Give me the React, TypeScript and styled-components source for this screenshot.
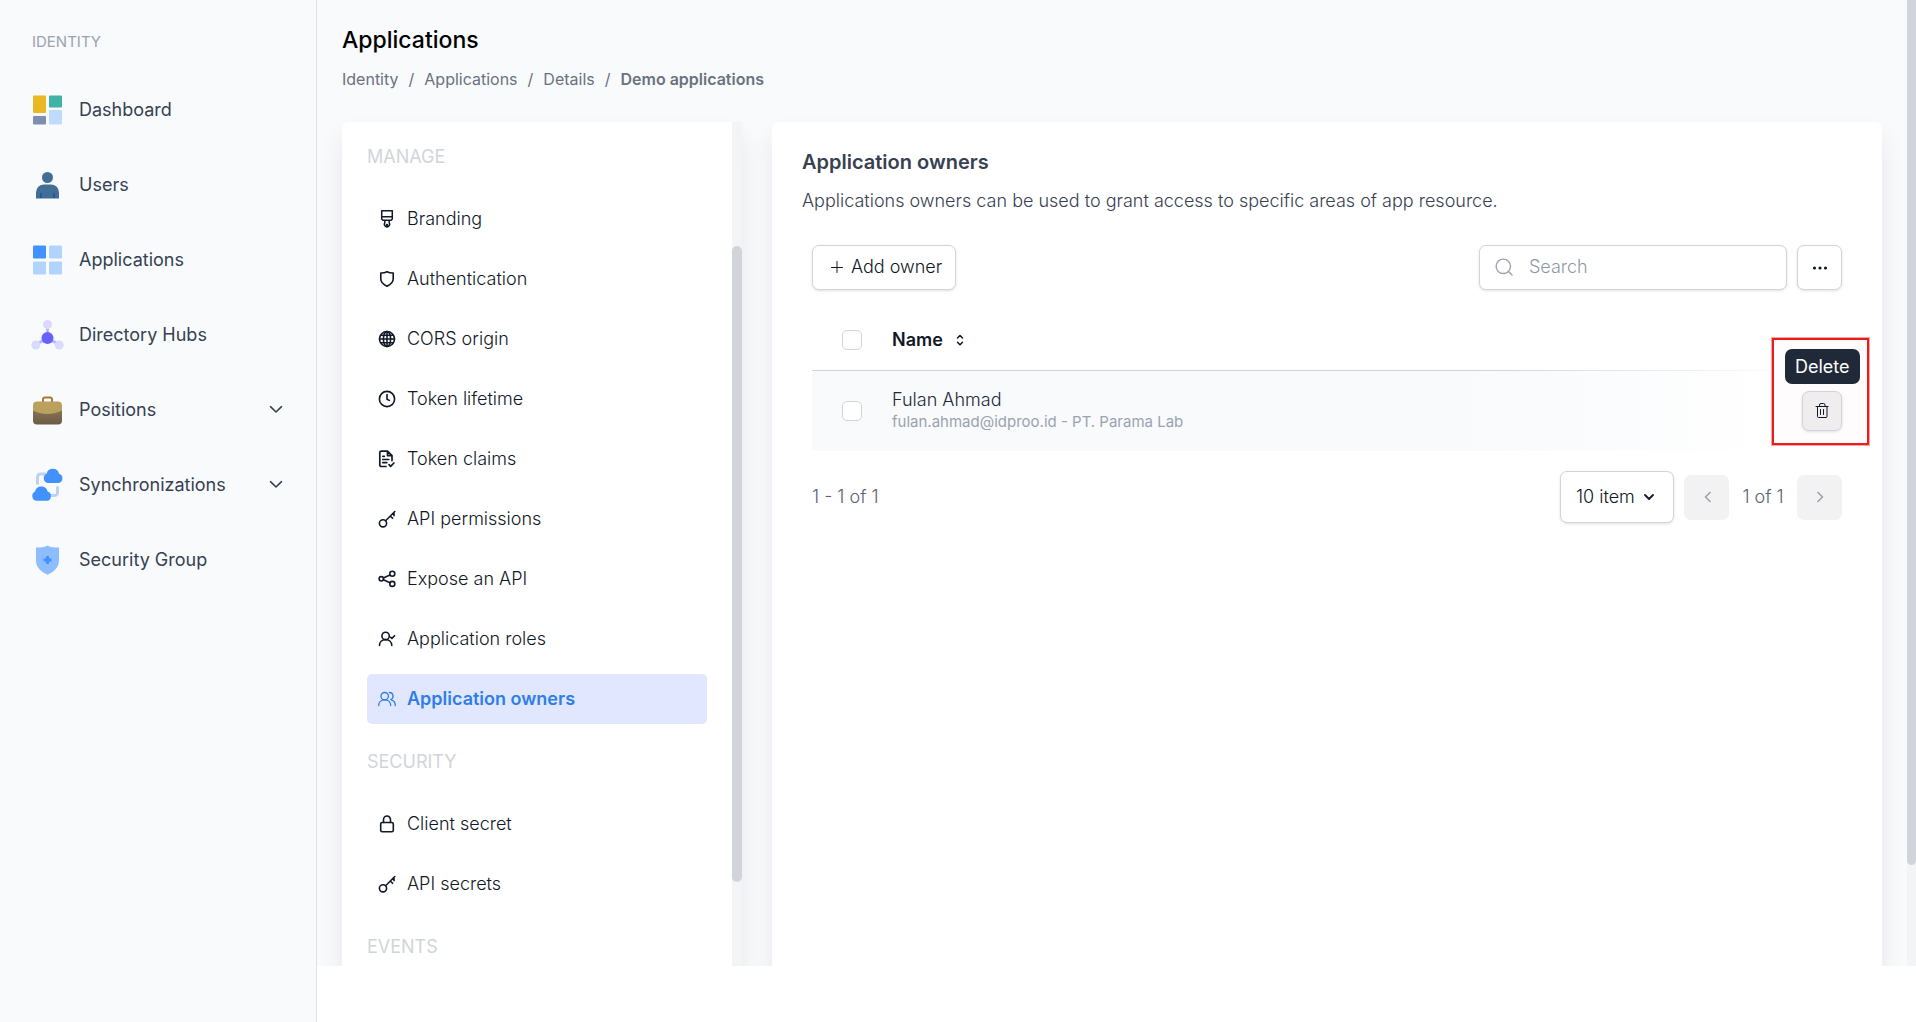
import React from "react";
import styled, { createGlobalStyle, css } from "styled-components";

const GlobalStyle = createGlobalStyle`
  *, *::before, *::after { box-sizing: border-box; }
  body {
    margin: 0;
    background: #ffffff;
    color: #111827;
    font-family: Inter, "Liberation Sans", sans-serif;
    font-size: 18px;
    line-height: 24px;
  }
  button, input, select { font: inherit; color: inherit; }
  h1, h2, h3, p, ul, ol { margin: 0; padding: 0; font-weight: 400; font-size: inherit; }
  ul, ol { list-style: none; }
  a { color: inherit; text-decoration: none; }
  svg { display: block; flex: none; }
`;

const Page = styled.div`
  display: flex;
  height: 100vh;
  overflow: hidden;
`;

/* ---------- Sidebar ---------- */

const Sidebar = styled.nav`
  flex: 0 0 317px;
  padding: 30px 33px 0 31px;
  background: #f8fafc;
  border-right: 1px solid #e0e2e6;
`;

const SidebarHeading = styled.h2`
  font-size: 15px;
  color: #9ca3af;
  padding-left: 1px;
  margin-bottom: 18px;
`;

const SidebarLink = styled.a`
  display: flex;
  align-items: center;
  gap: 15px;
  height: 75px;
  color: #374151;
  & > span { flex: 1; }
`;

/* ---------- Main ---------- */

const Main = styled.div`
  flex: 1;
  min-width: 0;
  height: calc(100vh - 56px);
  display: flex;
  overflow: hidden;
  background: #f8fafc;
`;

const Workspace = styled.main`
  flex: 1;
  min-width: 0;
  display: flex;
  flex-direction: column;
  padding: 24px 25px 0;
`;

const PageTitle = styled.h1`
  font-size: 23px;
  line-height: 32px;
  font-weight: 500;
  color: #000000;
`;

const Breadcrumb = styled.ol`
  display: flex;
  margin: 11px 0 31px;
  font-size: 16px;
  color: #6b7280;
  li + li::before { content: "/"; margin: 0 10px; font-weight: 400; }
  [aria-current] { font-weight: 600; }
`;

const Columns = styled.div`
  flex: 1;
  min-height: 0;
  display: flex;
  gap: 30px;
  font-weight: 300;
`;

const cardLook = css`
  background: #ffffff;
  border-radius: 7px;
  box-shadow: 0 14px 24px rgba(15, 23, 42, 0.08);
`;

const MenuCard = styled.aside`
  ${cardLook}
  flex: 0 0 400px;
  display: flex;
  height: calc(100% + 56px);
`;

const MenuScroll = styled.div`
  flex: 1;
  padding: 0 25px;
`;

const MenuHeading = styled.h3<{ $first?: boolean }>`
  height: ${(p) => (p.$first ? 72 : 75)}px;
  padding-top: ${(p) => (p.$first ? 23 : 26)}px;
  color: #d1d5db;
`;

const MenuList = styled.ul`
  display: flex;
  flex-direction: column;
  gap: 10px;
`;

const MenuLink = styled.a<{ $active?: boolean }>`
  display: flex;
  align-items: center;
  gap: 11px;
  height: 50px;
  padding-left: 11px;
  border-radius: 5px;
  color: ${(p) => (p.$active ? "#2f7de9" : "#111827")};
  background: ${(p) => (p.$active ? "#e0e7ff" : "transparent")};
  font-weight: ${(p) => (p.$active ? 600 : 300)};
`;

const Track = styled.div<{ $width: number }>`
  flex: 0 0 ${(p) => p.$width}px;
  background: #f3f4f6;
  overflow: hidden;
`;

const MenuThumb = styled.div`
  height: 636px;
  margin-top: 124px;
  border-radius: 5px;
  background: #d1d5db;
`;

const PageThumb = styled.div`
  height: 865px;
  border-radius: 0 0 5px 5px;
  background: #d1d5db;
`;

/* ---------- Owners panel ---------- */

const Panel = styled.section`
  ${cardLook}
  flex: 1;
  min-width: 0;
  height: calc(100% + 56px);
  padding: 26px 30px;
`;

const PanelTitle = styled.h2`
  font-size: 20px;
  line-height: 28px;
  font-weight: 600;
  color: #374151;
`;

const PanelText = styled.p`
  margin-top: 13px;
  font-weight: 300;
  color: #374151;
`;

const PanelBody = styled.div`
  padding: 32px 10px 0;
`;

const Toolbar = styled.div`
  display: flex;
  align-items: center;
  gap: 10px;
`;

const outlined = css`
  background: #ffffff;
  border: 1px solid #d1d5db;
  border-radius: 7px;
  box-shadow: 0 1px 3px rgba(0, 0, 0, 0.12);
`;

const AddButton = styled.button`
  ${outlined}
  display: flex;
  align-items: center;
  gap: 8px;
  height: 45px;
  padding: 0 13px 1px 18px;
  margin-right: auto;
`;

const SearchBox = styled.label`
  ${outlined}
  display: flex;
  align-items: center;
  gap: 16px;
  width: 308px;
  height: 45px;
  padding: 0 15px 1px;
  color: #9ca3af;
  input {
    flex: 1;
    min-width: 0;
    border: 0;
    padding: 0;
    outline: 0;
    background: transparent;
    color: #1f2937;
  }
  input::placeholder { color: #9098a6; opacity: 1; }
`;

const MoreButton = styled.button`
  ${outlined}
  display: grid;
  place-items: center;
  width: 45px;
  height: 45px;
  padding: 0;
`;

const OwnersTable = styled.table`
  width: 100%;
  margin-top: 20px;
  border-collapse: collapse;
  th, td { padding: 0; text-align: left; }
  thead tr {
    height: 61px;
    background: linear-gradient(to right, #d1d5db 66%, #ffffff 96%) bottom / 100% 1px no-repeat;
  }
  thead th { padding-bottom: 1px; }
  tbody tr {
    height: 80px;
    background: linear-gradient(to right, #f8fafc 64%, #ffffff 94%);
  }
`;

const CheckCell = styled.td`
  width: 80px;
  && { padding-left: 30px; }
`;

const Checkbox = styled.input`
  appearance: none;
  display: block;
  width: 20px;
  height: 20px;
  margin: 0;
  border: 1px solid #d1d5db;
  border-radius: 5px;
  background: #ffffff;
`;

const SortButton = styled.button`
  display: flex;
  align-items: center;
  gap: 11px;
  padding: 0;
  border: 0;
  background: none;
  font-weight: 600;
  color: #111827;
`;

const OwnerName = styled.div`
  line-height: 22px;
  color: #1f2937;
`;

const OwnerMeta = styled.div`
  font-size: 15px;
  line-height: 22px;
  font-weight: 400;
  color: #9ca3af;
`;

const ActionCell = styled.td`
  width: 40px;
`;

const ActionWrap = styled.div`
  position: relative;
  width: 40px;
  height: 40px;
`;

const Highlight = styled.div`
  position: absolute;
  top: -53px;
  left: -30px;
  width: 97px;
  height: 107px;
  border: 2px solid #ea1c1c;
  outline: 1px solid rgba(234, 28, 28, 0.4);
  background: #fffcfd;
`;

const DeleteButton = styled.button`
  ${outlined}
  position: relative;
  display: grid;
  place-items: center;
  width: 40px;
  height: 40px;
  padding: 0;
  background: #efedee;
`;

const Tooltip = styled.div`
  position: absolute;
  top: -42px;
  left: -17px;
  padding: 6px 10px 5px;
  border-radius: 7px;
  background: #1f2937;
  color: #ffffff;
  font-weight: 400;
`;

const Pager = styled.div`
  display: flex;
  align-items: center;
  gap: 10px;
  margin-top: 20px;
  color: #5b6372;
`;

const PagerRange = styled.span`
  margin-right: auto;
`;

const PagerPosition = styled.span`
  min-width: 48px;
  text-align: center;
`;

const PageSize = styled.div`
  position: relative;
  color: #111827;
  select {
    ${outlined}
    display: block;
    appearance: none;
    width: 114px;
    height: 52px;
    padding: 0 15px;
    color: #111827;
  }
  svg { position: absolute; right: 20px; top: 21px; pointer-events: none; }
`;

const PageButton = styled.button`
  display: grid;
  place-items: center;
  width: 45px;
  height: 45px;
  padding: 0;
  border: 0;
  border-radius: 7px;
  background: #f2f2f2;
  color: #9ca3af;
`;

/* ---------- Icons ---------- */

const Glyph = ({ children, size = 18, box = 18, width = 1.4 }: { children: React.ReactNode; size?: number; box?: number; width?: number }) => (
  <svg width={size} height={size} viewBox={`0 0 ${box} ${box}`} fill="none" stroke="currentColor" strokeWidth={width} strokeLinecap="round" strokeLinejoin="round" aria-hidden="true">
    {children}
  </svg>
);

const BrushIcon = () => (
  <Glyph width={1.5}>
    <path d="M3.700 .8h10.600v8.200l-1.200 1.200H4.900L3.700 9zM3.700 6.800h10.600M6.800 10.400v2.400a2.600 2.600 0 1 0 4.400 0v-2.400" />
    <circle cx="9" cy="15" r=".6" />
  </Glyph>
);
const ShieldIcon = () => (
  <Glyph width={1.6}>
    <path d="M9 1.700c-1.800 1-4 1.300-6.200 1.300v6c0 3.600 3 5.700 6.200 7.200 3.200-1.500 6.200-3.600 6.200-7.200V3C13 3 10.800 2.700 9 1.700z" />
  </Glyph>
);
const GlobeIcon = () => (
  <Glyph width={1.600}>
    <circle cx="9" cy="9" r="7.500" />
    <ellipse cx="9" cy="9" rx="3.600" ry="7.500" />
    <path d="M9 1.500v15M1.500 9h15M2.600 5.300h12.800M2.600 12.700h12.800" />
  </Glyph>
);
const ClockIcon = () => (
  <Glyph width={1.600}>
    <circle cx="9" cy="9" r="7.600" />
    <path d="M9 4.600v4.600l2.300 1.200" />
  </Glyph>
);
const DocCheckIcon = () => (
  <Glyph width={1.700}>
    <path d="M8 16.500H3.300a1.500 1.500 0 0 1-1.500-1.500V2.600a1.500 1.500 0 0 1 1.500-1.500h6.200l4.500 4.500v5M9.500 1.300v4.300H14M4.800 6.300h1.500M4.800 9.500h6M4.800 12.600h4M11 14.700l1.600 1.600 3.300-3.300" />
  </Glyph>
);
const KeyIcon = () => (
  <Glyph width={1.600}>
    <circle cx="5" cy="13.300" r="3.600" />
    <path d="M7.600 10.700L16.800 1.500M16 2.300v3.400M12.300 6l2.300 2.300" />
  </Glyph>
);
const ShareIcon = () => (
  <Glyph width={1.600}>
    <circle cx="3.300" cy="8.800" r="2.200" />
    <circle cx="14.300" cy="3.700" r="2.500" />
    <circle cx="14.300" cy="13.900" r="2.500" />
    <path d="M5.400 7.900l6.500-3M5.400 9.800l6.500 3" />
  </Glyph>
);
const RoleIcon = () => (
  <Glyph width={1.600}>
    <circle cx="7.600" cy="5.900" r="3.700" />
    <path d="M1.500 15.500c0-3.500 2.500-5.900 6.100-5.900s6.200 2.400 6.200 5.900M12.700 7.200l1.200 1.200 2.700-2.700" />
  </Glyph>
);
const OwnersIcon = () => (
  <Glyph width={1.300}>
    <circle cx="6.700" cy="6.200" r="3.700" />
    <path d="M.7 15.500c0-3.300 2.400-5.600 6-5.600s6 2.300 6 5.600M11.300 2.500a3.700 3.700 0 0 1 1.500 7.100M13.300 9.900c2.400.7 4 2.700 4 5.600" />
  </Glyph>
);
const LockIcon = () => (
  <Glyph width={1.600}>
    <rect x="2.700" y="7.500" width="12.600" height="9.200" rx="1.500" />
    <path d="M5.500 7.500V4.700a3.500 3.700 0 0 1 7 0v2.800" />
  </Glyph>
);

const NavSvg = ({ children }: { children: React.ReactNode }) => (
  <svg width="33" height="34" viewBox="0 0 33 34" aria-hidden="true">{children}</svg>
);

const DashboardIcon = () => (
  <NavSvg>
    <rect x="2" y="2.500" width="13" height="17.500" rx="1" fill="#e9b825" />
    <rect x="18" y="2.500" width="13" height="12" rx="1" fill="#3fb3a8" />
    <rect x="2" y="23" width="13" height="8.500" rx="1" fill="#7c8fae" />
    <rect x="18" y="17" width="13" height="14.500" rx="1" fill="#bfdbfe" />
  </NavSvg>
);
const UserIcon = () => (
  <NavSvg>
    <circle cx="16.500" cy="9.500" r="5.500" fill="#426d97" />
    <path d="M5 30.500v-6a8 8 0 0 1 8-8h7a8 8 0 0 1 8 8v6z" fill="#426d97" />
    <path d="M10 25v5M23 25v5" stroke="#1d5b90" strokeWidth="1.700" />
  </NavSvg>
);
const AppsIcon = () => (
  <NavSvg>
    <rect x="2" y="2.500" width="13" height="13" rx="1" fill="#4191ff" />
    <rect x="18" y="2.500" width="13" height="13" rx="1" fill="#b3d3ff" />
    <rect x="2" y="18.500" width="13" height="13" rx="1" fill="#b3d3ff" />
    <rect x="18" y="18.500" width="13" height="13" rx="1" fill="#b3d3ff" />
  </NavSvg>
);
const HubIcon = () => (
  <NavSvg>
    <path d="M16.500 7v13L6 26M16.500 20L27 26" stroke="#b5b1ff" strokeWidth="2.600" fill="none" />
    <circle cx="16.500" cy="6.500" r="4.500" fill="#dad9ff" />
    <circle cx="4.800" cy="27" r="4.500" fill="#dad9ff" />
    <circle cx="28.200" cy="27" r="4.500" fill="#dad9ff" />
    <circle cx="16.500" cy="20" r="6" fill="#6661ff" />
  </NavSvg>
);
const BriefcaseIcon = () => (
  <NavSvg>
    <defs>
      <linearGradient id="case-body" x1="0" y1="0" x2="0" y2="1">
        <stop offset="0" stopColor="#8f7b5c" />
        <stop offset="1" stopColor="#6b5c45" />
      </linearGradient>
    </defs>
    <path d="M12 9V6.500a2 2 0 0 1 2-2h5a2 2 0 0 1 2 2V9" fill="none" stroke="#aa7831" strokeWidth="2" />
    <rect x="2" y="12" width="29" height="19.500" rx="4" fill="url(#case-body)" />
    <path d="M2 17.500V12.500a4 4 0 0 1 4-4h21a4 4 0 0 1 4 4v5c-8 4.500-21 4.500-29 0z" fill="#baa15d" />
  </NavSvg>
);
const SyncIcon = () => (
  <NavSvg>
    <path d="M6.500 16.500V9a3 3 0 0 1 3-3H15M26.500 18.500v6a3 3 0 0 1-3 3H18" fill="none" stroke="#bcd2f0" strokeWidth="3" />
    <path d="M16.500 15a5 5 0 0 1-1-9.300 6.500 6.500 0 0 1 12.600 0 4.800 4.800 0 0 1-.6 9.300z" fill="#4191ff" />
    <path d="M5 32.800a5 5 0 0 1-1-9.300 6.500 6.500 0 0 1 12.600 0 4.800 4.800 0 0 1-.6 9.300z" fill="#4191ff" />
  </NavSvg>
);
const GroupShieldIcon = () => (
  <NavSvg>
    <path d="M16.500 2.500c-3 2-7 2-11.500 2v13c0 7 5 11 11.500 14.300C23 28.500 28 24.500 28 17.500v-13c-4.500 0-8.500 0-11.500-2z" fill="#8dbcff" />
    <path d="M16.500 13v8M12.500 17h8" stroke="#4191ff" strokeWidth="2.800" />
    <circle cx="16.500" cy="17" r="2.400" fill="#4191ff" />
  </NavSvg>
);

const PlusIcon = () => <Glyph size={12} box={12} width={1}><path d="M6 .5v11M.5 6.500h11" /></Glyph>;
const SearchIcon = () => <Glyph><circle cx="8.300" cy="8.300" r="7.200" /><path d="M13.500 13.500l3.500 3.500" /></Glyph>;
const DotsIcon = () => (
  <svg width="16" height="16" viewBox="0 0 16 16" fill="currentColor" aria-hidden="true">
    <circle cx="2.500" cy="8" r="1.600" /><circle cx="8" cy="8" r="1.600" /><circle cx="13.500" cy="8" r="1.600" />
  </svg>
);
const SortIcon = () => <Glyph size={12} box={12} width={1.500}><path d="M3.500 4L6 1.500 8.500 4M3.500 8.200L6 10.700l2.500-2.500" /></Glyph>;
const TrashIcon = () => (
  <Glyph width={1}>
    <path d="M3 4.500h12M6.500 4.300V3A1.500 1.500 0 0 1 8 1.500h2.500A1.500 1.500 0 0 1 12 3v1.300M4.500 4.500v10a1 1 0 0 0 1 1h7.500a1 1 0 0 0 1-1v-10M7.500 7.500v5M10.500 7.500v5" />
  </Glyph>
);
const NavChevron = () => <Glyph size={14} box={14} width={1.600}><path d="M1.500 3.700L7 9l5.500-5.300" /></Glyph>;
const SmallChevron = () => <Glyph size={10} box={10} width={1.800}><path d="M1 3l4 4 4-4" /></Glyph>;
const PrevIcon = () => <Glyph size={12} box={12} width={1.700}><path d="M9 1.500L4.500 6 9 10.500" /></Glyph>;
const NextIcon = () => <Glyph size={12} box={12} width={1.700}><path d="M4 1.500L8.500 6 4 10.500" /></Glyph>;

/* ---------- Data ---------- */

const navigation = [
  { label: "Dashboard", Icon: DashboardIcon },
  { label: "Users", Icon: UserIcon },
  { label: "Applications", Icon: AppsIcon },
  { label: "Directory Hubs", Icon: HubIcon },
  { label: "Positions", Icon: BriefcaseIcon, expandable: true },
  { label: "Synchronizations", Icon: SyncIcon, expandable: true },
  { label: "Security Group", Icon: GroupShieldIcon },
];

const menuGroups = [
  {
    heading: "MANAGE",
    items: [
      { label: "Branding", Icon: BrushIcon },
      { label: "Authentication", Icon: ShieldIcon },
      { label: "CORS origin", Icon: GlobeIcon },
      { label: "Token lifetime", Icon: ClockIcon },
      { label: "Token claims", Icon: DocCheckIcon },
      { label: "API permissions", Icon: KeyIcon },
      { label: "Expose an API", Icon: ShareIcon },
      { label: "Application roles", Icon: RoleIcon },
      { label: "Application owners", Icon: OwnersIcon, active: true },
    ],
  },
  {
    heading: "SECURITY",
    items: [
      { label: "Client secret", Icon: LockIcon },
      { label: "API secrets", Icon: KeyIcon },
    ],
  },
  { heading: "EVENTS", items: [] },
];

const owners = [{ name: "Fulan Ahmad", meta: "fulan.ahmad@idproo.id - PT. Parama Lab" }];

export default function App() {
  return (
    <Page>
      <GlobalStyle />
      <Sidebar aria-label="Main">
        <SidebarHeading>IDENTITY</SidebarHeading>
        {navigation.map(({ label, Icon, expandable }) => (
          <SidebarLink key={label} href="#">
            <Icon />
            <span>{label}</span>
            {expandable && <NavChevron />}
          </SidebarLink>
        ))}
      </Sidebar>

      <Main>
        <Workspace>
          <PageTitle>Applications</PageTitle>
          <Breadcrumb>
            <li><a href="#">Identity</a></li>
            <li><a href="#">Applications</a></li>
            <li><a href="#">Details</a></li>
            <li><span aria-current="page">Demo applications</span></li>
          </Breadcrumb>

          <Columns>
            <MenuCard>
              <MenuScroll>
                {menuGroups.map(({ heading, items }, index) => (
                  <React.Fragment key={heading}>
                    <MenuHeading $first={index === 0}>{heading}</MenuHeading>
                    <MenuList>
                      {items.map(({ label, Icon, active }: any) => (
                        <li key={label}>
                          <MenuLink href="#" $active={active}>
                            <Icon />
                            {label}
                          </MenuLink>
                        </li>
                      ))}
                    </MenuList>
                  </React.Fragment>
                ))}
              </MenuScroll>
              <Track $width={10}><MenuThumb /></Track>
            </MenuCard>

            <Panel>
              <PanelTitle>Application owners</PanelTitle>
              <PanelText>Applications owners can be used to grant access to specific areas of app resource.</PanelText>
              <PanelBody>
                <Toolbar>
                  <AddButton type="button"><PlusIcon />Add owner</AddButton>
                  <SearchBox>
                    <SearchIcon />
                    <input type="text" placeholder="Search" aria-label="Search" />
                  </SearchBox>
                  <MoreButton type="button" aria-label="More options"><DotsIcon /></MoreButton>
                </Toolbar>

                <OwnersTable>
                  <thead>
                    <tr>
                      <CheckCell as="th"><Checkbox type="checkbox" aria-label="Select all" /></CheckCell>
                      <th colSpan={2}><SortButton type="button">Name<SortIcon /></SortButton></th>
                    </tr>
                  </thead>
                  <tbody>
                    {owners.map((owner) => (
                      <tr key={owner.name}>
                        <CheckCell><Checkbox type="checkbox" aria-label={`Select ${owner.name}`} /></CheckCell>
                        <td>
                          <OwnerName>{owner.name}</OwnerName>
                          <OwnerMeta>{owner.meta}</OwnerMeta>
                        </td>
                        <ActionCell>
                          <ActionWrap>
                            <Highlight />
                            <DeleteButton type="button" aria-label="Delete"><TrashIcon /></DeleteButton>
                            <Tooltip role="tooltip">Delete</Tooltip>
                          </ActionWrap>
                        </ActionCell>
                      </tr>
                    ))}
                  </tbody>
                </OwnersTable>

                <Pager>
                  <PagerRange>1 - 1 of 1</PagerRange>
                  <PageSize>
                    <select aria-label="Items per page" defaultValue="10">
                      <option value="10">10 item</option>
                    </select>
                    <SmallChevron />
                  </PageSize>
                  <PageButton type="button" aria-label="Previous page"><PrevIcon /></PageButton>
                  <PagerPosition>1 of 1</PagerPosition>
                  <PageButton type="button" aria-label="Next page"><NextIcon /></PageButton>
                </Pager>
              </PanelBody>
            </Panel>
          </Columns>
        </Workspace>
        <Track $width={9}><PageThumb /></Track>
      </Main>
    </Page>
  );
}
